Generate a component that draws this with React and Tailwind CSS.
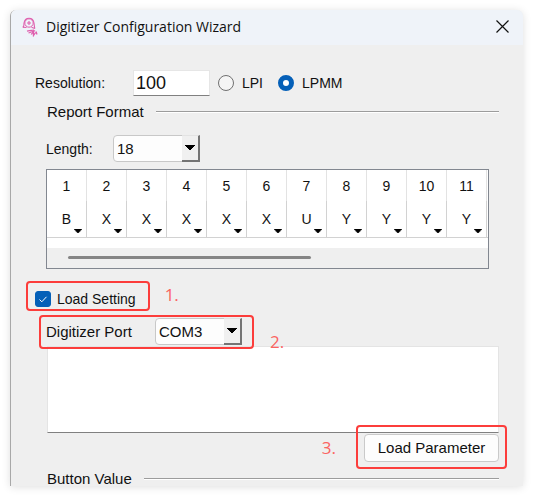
import React, { useState } from "react";

const FIELDS = ["B", "X", "X", "X", "X", "X", "U", "Y", "Y", "Y", "Y"];

function Arrow({ className = "" }) {
  return (
    <svg viewBox="0 0 10 5" className={`pointer-events-none ${className}`} aria-hidden="true">
      <path d="M0 0h10v1H9v1H8v1H7v1H6v1H4V4H3V3H2V2H1V1H0z" fill="#000" />
    </svg>
  );
}

function Combo({ id, options, value }) {
  return (
    <div className="relative h-[27px] w-[87px]">
      <select
        id={id}
        defaultValue={value}
        className="h-full w-full appearance-none rounded-l-[4px] border border-[#c8c8c8] bg-[#fdfdfd] pl-[3px] text-[15px] leading-[20px] outline-none"
      >
        {options.map((o) => (
          <option key={o}>{o}</option>
        ))}
      </select>
      <span className="pointer-events-none absolute inset-y-0 right-0 flex w-[18px] justify-center border-r-2 border-b-2 border-t border-t-[#e3e3e3] border-[#747474] bg-[#f0f0f0] pt-[9px]">
        <Arrow className="h-[5px] w-[10px]" />
      </span>
    </div>
  );
}

function Callout({ className }) {
  return <span className={`pointer-events-none absolute rounded-[4px] border-2 border-[#fc3d3b] ${className}`} />;
}

function Divider() {
  return <div className="h-[2px] flex-1 border-t border-[#9c9c9c] bg-white" />;
}

export default function App() {
  const [unit, setUnit] = useState("LPMM");
  return (
    <main className="p-[10px] font-['Liberation_Sans',Arial,sans-serif] text-[14px] leading-[20px] text-[#111]">
      <section className="overflow-hidden rounded-t-[6px] border-l border-[#a8a8a8] bg-[#efefef] shadow-[0_1px_9px_rgba(0,0,0,0.13)]">
        <header className="flex h-[35px] items-center bg-[#eff3f9] pr-[14px] pb-[2px] pl-[11px]">
          <svg viewBox="0 0 16 20" className="h-[20px] w-[16px]" fill="none" stroke="#df5fae" aria-hidden="true">
            <path d="M.8 10.300C2.300 9.500 1.800 8 2 6 2.500 2.700 4.600 1.200 7 1.200c2.800 0 4.600 1.800 5 4.800.2 1.800.3 3.200.8 5.500" strokeWidth="1.100" />
            <circle cx="7" cy="6" r="4.200" strokeWidth="1" />
            <path d="M7 4v4M5 6h4M.8 10.300l3.700.2M9.500 10.200l3.300 1.300" strokeWidth="1.100" />
            <path d="M5 14.200l4-.9M6.500 16l3-1M9 13l2 2M10.500 12.800l2.500 1.500M9.300 17.500l2-3 .2 4 2-3M14 14.500l1 3" strokeWidth="1.300" />
          </svg>
          <h1 className="ml-[8px] flex-1 font-['Open_Sans','Noto_Sans',sans-serif] text-[14px] leading-[20px]">
            Digitizer Configuration Wizard
          </h1>
          <button aria-label="Close" className="p-0">
            <svg viewBox="0 0 13 13" className="h-[13px] w-[13px]" stroke="#111" strokeWidth="1.200">
              <path d="M.5.5l12 12M12.500.5l-12 12" />
            </svg>
          </button>
        </header>

        <div className="px-[24px]">
          <div className="mt-[25px] flex h-[26px] items-center">
            <label htmlFor="resolution" className="w-[98px]">Resolution:</label>
            <input
              id="resolution"
              defaultValue="100"
              className="h-[26px] w-[77px] border border-[#e6e6e6] border-b-[#808080] bg-white px-[2px] text-[18px] outline-none"
            />
            <div className="ml-[8px] flex gap-[15px]">
              {["LPI", "LPMM"].map((u) => (
                <label key={u} className="flex items-center gap-[8px]">
                  <input
                    type="radio"
                    name="unit"
                    checked={unit === u}
                    onChange={() => setUnit(u)}
                    className="h-[16px] w-[16px] appearance-none rounded-full border border-[#707070] bg-[#f5f5f5] checked:border-[5px] checked:border-[#0560b8] checked:bg-white"
                  />
                  {u}
                </label>
              ))}
            </div>
          </div>

          <div className="mt-[6px] flex items-center gap-[12px] pl-[12px] text-[15px]">
            <h2>Report Format</h2>
            <Divider />
          </div>

          <div className="mt-[13px] flex items-center pl-[11px]">
            <label htmlFor="length" className="w-[67px]">Length:</label>
            <Combo id="length" value="18" options={["16", "17", "18"]} />
          </div>

          <div className="mt-[7px] mr-[10px] ml-[11px] border border-[#828790] bg-white">
            <table className="w-full table-fixed border-separate border-spacing-0">
              <thead>
                <tr>
                  {FIELDS.map((_, i) => (
                    <th key={i} className="h-[31px] w-[40px] border-r border-[#e3e3e3] p-0 text-[14px] font-normal">
                      {i + 1}
                    </th>
                  ))}
                  <td className="p-0" />
                </tr>
              </thead>
              <tbody>
                <tr>
                  {FIELDS.map((f, i) => (
                    <td key={i} className="border-r border-b border-[#d2d2d2] p-0">
                      <div className="relative h-[36px]">
                        <select
                          aria-label={`Field ${i + 1}`}
                          defaultValue={f}
                          className="h-full w-full appearance-none bg-transparent text-center text-[14px] outline-none [text-align-last:center]"
                        >
                          {["B", "X", "Y", "U"].map((o) => (
                            <option key={o}>{o}</option>
                          ))}
                        </select>
                        <Arrow className="absolute right-[4px] bottom-[4px] h-[4px] w-[8px]" />
                      </div>
                    </td>
                  ))}
                  <td className="border-b border-[#d2d2d2] p-0" />
                </tr>
              </tbody>
            </table>
            <div className="mt-[10px] h-[20px] bg-[#efefef] px-[21px] pt-[8px]">
              <div className="h-[3px] w-[61%] rounded-full bg-[#858585]" />
            </div>
          </div>

          <div className="mt-[20px] flex items-start">
            <label className="relative flex items-center gap-[6px]">
              <span className="grid">
                <input
                  type="checkbox"
                  defaultChecked
                  className="peer col-start-1 row-start-1 h-[16px] w-[16px] appearance-none rounded-[3px] border border-[#707070] checked:border-[#0560b8] checked:bg-[#0560b8]"
                />
                <svg viewBox="0 0 16 16" className="pointer-events-none invisible col-start-1 row-start-1 h-[16px] w-[16px] peer-checked:visible" fill="none" stroke="#fff">
                  <path d="M4.500 8.500l2.300 2.300 4.700-5" />
                </svg>
              </span>
              Load Setting
              <Callout className="-top-[8px] -right-[14px] -bottom-[2px] -left-[9px]" />
            </label>
            <span className="-mt-[4px] ml-[29px] font-['Open_Sans','Noto_Sans',sans-serif] text-[17px] text-[#fb6361]">1.</span>
          </div>

          <div className="mt-[9px] flex h-[27px] items-start pl-[11px] text-[15px]">
            <div className="relative flex items-center">
              <label htmlFor="port" className="w-[109px]">Digitizer Port</label>
              <Combo id="port" value="COM3" options={["COM1", "COM2", "COM3"]} />
              <Callout className="-top-[3px] -right-[12px] -bottom-[4px] -left-[7px] z-10" />
            </div>
            <span className="relative z-10 mt-[14px] ml-[28px] font-['Open_Sans','Noto_Sans',sans-serif] text-[17px] leading-[20px] text-[#fb6361]">2.</span>
          </div>

          <textarea
            aria-label="Parameters"
            className="mt-px ml-[12px] block h-[87px] w-[calc(100%-12px)] resize-none border border-[#e4e4e4] border-b-[#808080] bg-white outline-none"
          />

          <div className="mt-px flex items-center justify-end gap-[28px]">
            <span className="font-['Open_Sans','Noto_Sans',sans-serif] text-[17px] text-[#fb6361]">3.</span>
            <div className="relative">
              <button className="block h-[28px] w-[135px] rounded-[4px] border border-[#cacaca] bg-[#fdfdfd] text-[15px]">
                Load Parameter
              </button>
              <Callout className="-inset-x-[8px] -top-[9px] -bottom-[7px]" />
            </div>
          </div>

          <div className="mt-[9px] flex items-center gap-[12px] pl-[12px] text-[15px] leading-[15px]">
            <h2>Button Value</h2>
            <Divider />
          </div>
        </div>
      </section>
    </main>
  );
}
